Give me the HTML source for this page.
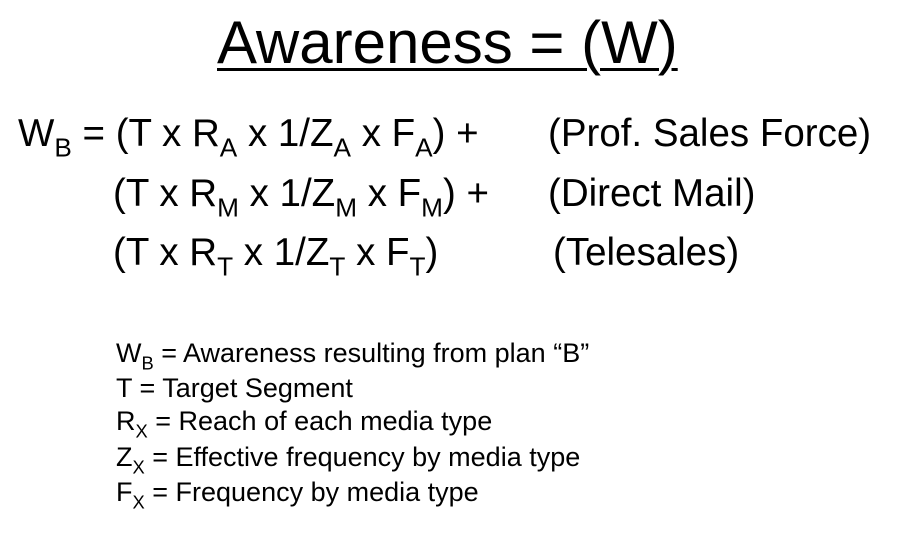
<!DOCTYPE html>
<html><head><meta charset="utf-8"><style>
html,body{margin:0;padding:0;background:#fff;width:900px;height:540px;overflow:hidden}
body{font-family:"Liberation Sans",Arial,sans-serif;color:#000;position:relative}
.a{position:absolute;white-space:nowrap;line-height:1}
.t{font-size:60px;left:217px;top:13px;text-decoration:underline;text-decoration-thickness:3px;text-underline-offset:5px}
.f{font-size:38.5px}
.l{font-size:27px;left:116px}
sub{font-size:0.68em;vertical-align:-0.4em;line-height:0}
</style></head><body>
<div class="a t">Awareness = (W)</div>
<div class="a f" style="left:18px;top:115px">W<sub>B</sub> = (T x R<sub>A</sub> x 1/Z<sub>A</sub> x F<sub>A</sub>) +</div>
<div class="a f" style="left:548px;top:115px">(Prof. Sales Force)</div>
<div class="a f" style="left:113px;top:175px">(T x R<sub>M</sub> x 1/Z<sub>M</sub> x F<sub>M</sub>) +</div>
<div class="a f" style="left:548px;top:175px">(Direct Mail)</div>
<div class="a f" style="left:113px;top:234px">(T x R<sub>T</sub> x 1/Z<sub>T</sub> x F<sub>T</sub>)</div>
<div class="a f" style="left:553px;top:234px">(Telesales)</div>
<div class="a l" style="top:340px">W<sub>B</sub> = Awareness resulting from plan “B”</div>
<div class="a l" style="top:375px">T = Target Segment</div>
<div class="a l" style="top:408px">R<sub>X</sub> = Reach of each media type</div>
<div class="a l" style="top:444px">Z<sub>X</sub> = Effective frequency by media type</div>
<div class="a l" style="top:479px">F<sub>X</sub> = Frequency by media type</div>
</body></html>
